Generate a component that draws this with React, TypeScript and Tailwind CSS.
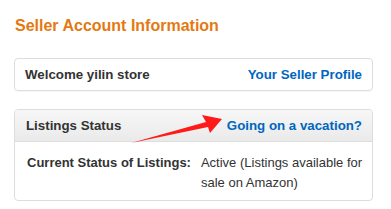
export default function App() {
  return (
    <div className="relative w-[391px] h-[209px] bg-white pl-[14px] pr-[18px] pt-[16px] font-['Liberation_Sans',Arial,sans-serif] text-[13px] text-[#333]">
      <h1 className="pl-[1px] text-[16px] leading-[20px] font-bold text-[#e47911]">
        Seller Account Information
      </h1>

      <div className="mt-[22px] h-[33px] flex items-center justify-between px-[10px] text-[13.3px] border border-[#ddd] rounded-[4px] shadow-[0_1px_0_rgba(0,0,0,0.03)]">
        <span className="font-bold">Welcome yilin store</span>
        <span className="font-bold text-[#0066c0]">Your Seller Profile</span>
      </div>

      <div className="mt-[18px] border border-[#ddd] rounded-[4px] overflow-hidden">
        <div className="h-[32px] flex items-center justify-between pl-[11px] pr-[10px] text-[13.3px] border-b border-[#ddd] bg-gradient-to-b from-[#f7f7f7] to-[#eaeaea]">
          <span className="font-bold">Listings Status</span>
          <span className="font-bold text-[#0066c0]">Going on a vacation?</span>
        </div>
        <div className="flex gap-[10px] pl-[12px] pt-[11px] pb-[7px] leading-[20px]">
          <span className="font-bold whitespace-nowrap">Current Status of Listings:</span>
          <span className="w-[165px]">Active (Listings available for sale on Amazon)</span>
        </div>
      </div>

      {/* red annotation arrow */}
      <svg className="absolute left-0 top-0 pointer-events-none" width="391" height="209" viewBox="0 0 391 209">
        <polygon
          points="131,143 206,122 202,115 222,119 210,133 208,127"
          fill="#ff1a1a"
        />
      </svg>
    </div>
  );
}
